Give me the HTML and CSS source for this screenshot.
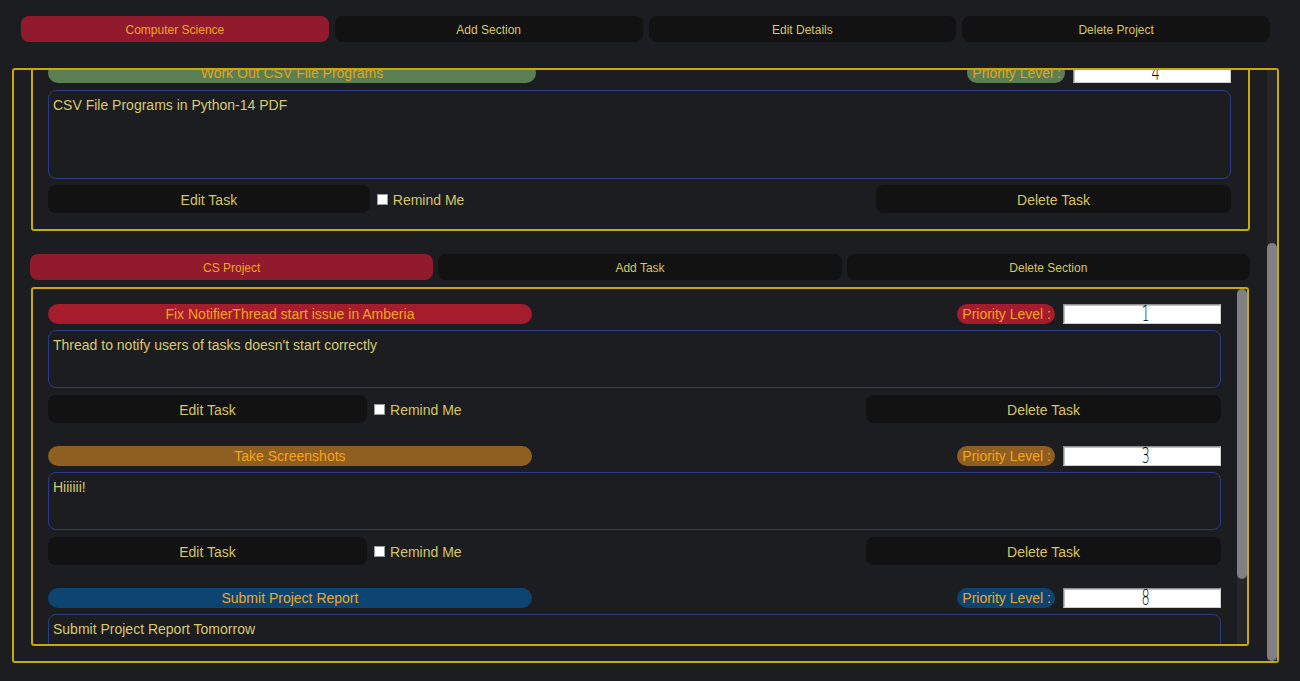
FILE: index.html
```html
<!DOCTYPE html>
<html lang="en">
<head>
<meta charset="utf-8">
<title>Project</title>
<link rel="stylesheet" href="styles.css">
</head>
<body>
<div class="toolbar">
  <div class="btn btn-red">Computer Science</div>
  <div class="btn">Add Section</div>
  <div class="btn">Edit Details</div>
  <div class="btn">Delete Project</div>
</div>

<div class="frame">
  <div class="viewport">
    <div class="content">

      <section class="section">
        <div class="box box-static">
          <div class="task">
            <div class="task-top">
              <div class="title pill-green">Work Out CSV File Programs</div>
              <div class="spacer"></div>
              <div class="prio pill-green">Priority Level :</div>
              <div class="lcd"><span class="digit">4</span></div>
            </div>
            <div class="desc desc-tall">CSV File Programs in Python-14 PDF</div>
            <div class="task-actions">
              <div class="btn tbtn edit">Edit Task</div>
              <div class="remind"><span class="check"></span>Remind Me</div>
              <div class="spacer"></div>
              <div class="btn tbtn del">Delete Task</div>
            </div>
          </div>
        </div>
      </section>

      <section class="section">
        <div class="sec-head">
          <div class="btn btn-red">CS Project</div>
          <div class="btn">Add Task</div>
          <div class="btn">Delete Section</div>
        </div>
        <div class="box box-scroll">
          <div class="inner-view">
            <div class="task">
              <div class="task-top">
                <div class="title pill-red">Fix NotifierThread start issue in Amberia</div>
                <div class="spacer"></div>
                <div class="prio pill-red">Priority Level :</div>
                <div class="lcd"><span class="digit">1</span></div>
              </div>
              <div class="desc">Thread to notify users of tasks doesn't start correctly</div>
              <div class="task-actions">
                <div class="btn tbtn edit">Edit Task</div>
                <div class="remind"><span class="check"></span>Remind Me</div>
                <div class="spacer"></div>
                <div class="btn tbtn del">Delete Task</div>
              </div>
            </div>

            <div class="task">
              <div class="task-top">
                <div class="title pill-brown">Take Screenshots</div>
                <div class="spacer"></div>
                <div class="prio pill-brown">Priority Level :</div>
                <div class="lcd"><span class="digit">3</span></div>
              </div>
              <div class="desc">Hiiiiii!</div>
              <div class="task-actions">
                <div class="btn tbtn edit">Edit Task</div>
                <div class="remind"><span class="check"></span>Remind Me</div>
                <div class="spacer"></div>
                <div class="btn tbtn del">Delete Task</div>
              </div>
            </div>

            <div class="task">
              <div class="task-top">
                <div class="title pill-blue">Submit Project Report</div>
                <div class="spacer"></div>
                <div class="prio pill-blue">Priority Level :</div>
                <div class="lcd"><span class="digit">8</span></div>
              </div>
              <div class="desc">Submit Project Report Tomorrow</div>
            </div>
          </div>
          <div class="scrollbar inner-bar"><div class="handle inner-handle"></div></div>
        </div>
      </section>

    </div>
  </div>
  <div class="scrollbar outer-bar"><div class="outer-gap"></div><div class="handle outer-handle"></div></div>
</div>
</body>
</html>
```

FILE: styles.css
```css
* { box-sizing: border-box; }

html, body {
  margin: 0;
  padding: 0;
  background: #1c1d21;
  width: 1300px;
  height: 681px;
  overflow: hidden;
  font-family: "Liberation Sans", Arial, sans-serif;
}

.btn {
  background: #121212;
  color: #d7c663;
  border-radius: 8px;
  display: flex;
  align-items: center;
  justify-content: center;
  white-space: nowrap;
  padding-top: 2px;
}

.btn-red {
  background: #921a2d;
  color: #f0a71e;
}

.toolbar {
  display: flex;
  gap: 6px;
  margin: 16px 30px 0 21px;
  height: 26px;
  font-size: 12px;
}

.toolbar .btn { flex: 1; }

.frame {
  margin: 26px 21px 0 12px;
  height: 595px;
  border: 2px solid #c9a80c;
  border-radius: 3px;
  display: flex;
}

.viewport {
  flex: 1;
  overflow: hidden;
  padding: 0 17px;
}

.content {
  margin-top: -24px;
}

.section + .section {
  margin-top: 23px;
}

.sec-head {
  display: flex;
  gap: 5px;
  height: 26px;
  font-size: 12px;
  margin-left: -1px;
}

.sec-head .btn { flex: 1; }

.box {
  border: 2px solid #c9a80c;
  border-radius: 3px;
}

.box-static {
  padding: 15px 17px 16px 15px;
}

.box-static .task-actions { margin-top: 6px; }

.box-scroll {
  margin-top: 7px;
  height: 359px;
  display: flex;
  margin-right: 1px;
}

.inner-view {
  flex: 1;
  overflow: hidden;
  padding: 15px 16px 0 15px;
}

.scrollbar {
  width: 10px;
  background: #262627;
  display: flex;
  flex-direction: column;
}

.handle {
  background: #808080;
  border-radius: 5px;
}

.inner-handle { height: 290px; }

.outer-gap { height: 173px; }
.outer-handle { flex: 1; }

.task + .task { margin-top: 23px; }

.task-top {
  display: flex;
  align-items: center;
  height: 20px;
}

.spacer { flex: 1; }

.title {
  width: 41.25%;
  height: 20px;
  border-radius: 10px;
  color: #f2a51c;
  font-size: 14px;
  line-height: 21px;
  text-align: center;
  white-space: nowrap;
}

.prio {
  height: 20px;
  border-radius: 10px;
  color: #f2a51c;
  font-size: 14px;
  line-height: 21px;
  padding: 0 4px 0 5px;
  white-space: nowrap;
}

.pill-green { background: #5a7f52; color: #e6a21c; }
.pill-red { background: #a51c2d; }
.pill-brown { background: #8f5e21; }
.pill-blue { background: #0c4572; }

.lcd {
  width: 158px;
  height: 20px;
  margin-left: 8px;
  background: #ffffff;
  border: 1px solid #8e8e8e;
  border-right-color: #cfcfcf;
  border-bottom-color: #cfcfcf;
  box-shadow: inset 1px 1px 0 #c0c0c0;
  display: flex;
  align-items: center;
  justify-content: center;
  padding-left: 8px;
  overflow: hidden;
}

.digit {
  display: inline-block;
  color: #000000;
  font-family: "DejaVu Sans", sans-serif;
  font-weight: 200;
  font-size: 21px;
  line-height: 18px;
  transform: scaleX(0.62);
}

.desc {
  margin-top: 6px;
  height: 58px;
  border: 1px solid #2d3a87;
  border-radius: 8px;
  color: #d9c970;
  font-size: 14px;
  line-height: 16px;
  padding: 6px 4px;
}

.desc-tall { height: 89px; margin-top: 7px; }

.task-actions {
  margin-top: 7px;
  display: flex;
  align-items: center;
  height: 28px;
  font-size: 14px;
}

.tbtn {
  height: 28px;
  font-size: 14px;
}

.edit { width: 27.2%; }
.del { width: 355px; }

.remind {
  display: flex;
  align-items: center;
  margin-left: 7px;
  color: #d7c663;
  white-space: nowrap;
  padding-top: 1px;
}

.check {
  width: 11px;
  height: 11px;
  background: #ffffff;
  border: 1px solid #9a9a9a;
  margin-right: 5px;
  margin-top: -1px;
}
```
